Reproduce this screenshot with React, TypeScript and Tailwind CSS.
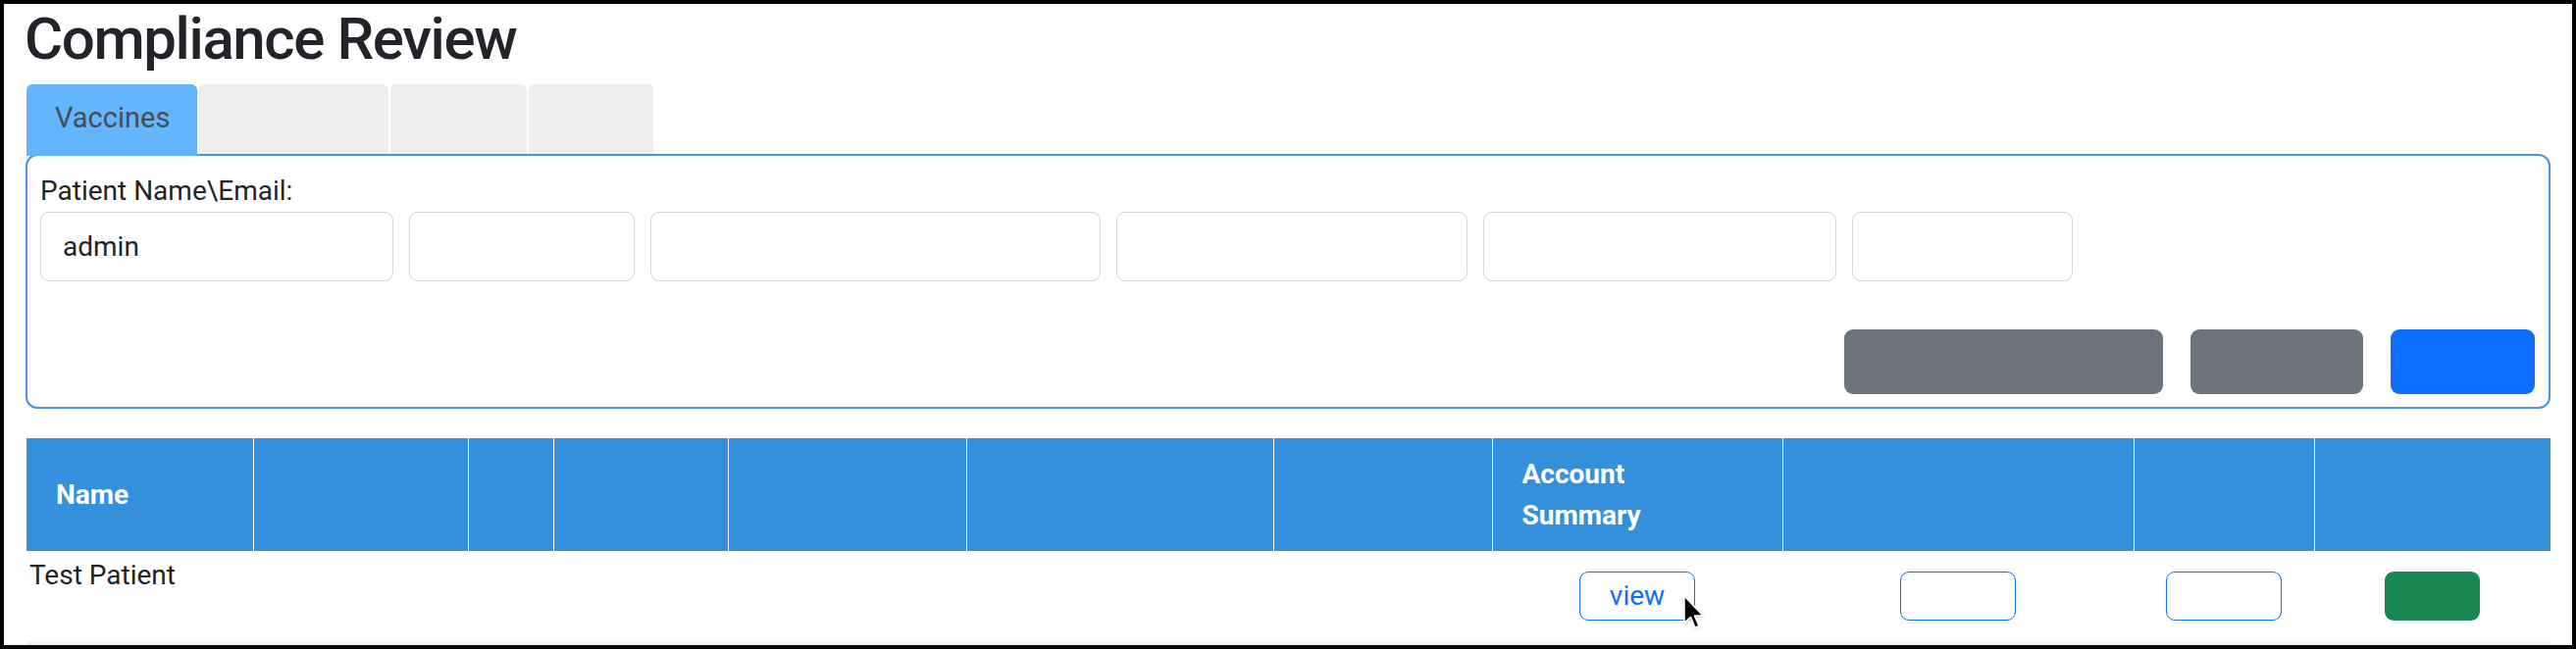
import { Fragment } from 'react'

const inputWidths = ['w-[360px]', 'w-[230px]', 'w-[459px]', 'w-[358px]', 'w-[360px]', 'w-[225px]']

const columns = [
  { w: 'w-[231px]', label: 'Name' },
  { w: 'w-[219px]', label: '' },
  { w: 'w-[87px]', label: '' },
  { w: 'w-[178px]', label: '' },
  { w: 'w-[243px]', label: '' },
  { w: 'w-[313px]', label: '' },
  { w: 'w-[223px]', label: '' },
  { w: 'w-[296px]', label: 'Account|Summary' },
  { w: 'w-[358px]', label: '' },
  { w: 'w-[184px]', label: '' },
  { w: 'w-[241px]', label: '' },
]

function Cursor() {
  return (
    <svg width="24" height="38" viewBox="0 0 20 32" className="absolute left-[105px] top-[23px] pointer-events-none drop-shadow">
      <path
        d="M1.5 1.5 L1.5 25 L7 19.8 L10.8 28.8 L14.2 27.4 L10.5 18.6 L17.8 18.6 Z"
        fill="#000"
        stroke="#fff"
        strokeWidth="1.4"
        strokeLinejoin="round"
      />
    </svg>
  )
}

export default function App() {
  return (
    <div className="h-[662px] w-[2626px] overflow-hidden border-4 border-black bg-white pl-[22px] pr-[22px] font-['Roboto',sans-serif] text-[#212529]">
      <h1 className="mb-[10px] -ml-[1px] text-[60px] font-medium leading-[72px] tracking-[-1.4px]">Compliance Review</h1>

      {/* Tabs */}
      <div className="flex h-[71px] gap-[2px] pl-[1px]">
        <div className="relative z-10 flex h-[73px] w-[174px] items-start rounded-t-[6px] bg-[#63b5fd] pl-[29px] pt-[13px] text-[29px] leading-[42px] text-[#454d55]">
          Vaccines
        </div>
        <div className="h-[71px] w-[193px] rounded-t-[6px] bg-[#eeeeee]" />
        <div className="h-[71px] w-[139px] rounded-t-[6px] bg-[#eeeeee]" />
        <div className="h-[71px] w-[127px] rounded-t-[6px] bg-[#eeeeee]" />
      </div>

      {/* Filter panel */}
      <div className="rounded-[12px] border-2 border-[#4a94de] px-[13px] pb-[13px] pt-[15px]">
        <label className="block text-[28px] leading-[42px]">Patient Name\Email:</label>
        <div className="flex gap-[16px]">
          {inputWidths.map((w, i) => (
            <input
              key={i}
              readOnly
              value={i === 0 ? 'admin' : ''}
              className={`${w} h-[71px] rounded-[9px] border border-[#ced4da] bg-white px-[22px] text-[28px] text-[#212529] outline-none`}
            />
          ))}
        </div>
        <div className="mt-[49px] flex justify-end gap-[28px] pr-[1px]">
          <button className="h-[66px] w-[325px] rounded-[9px] bg-[#6c757d]" />
          <button className="h-[66px] w-[176px] rounded-[9px] bg-[#6c757d]" />
          <button className="h-[66px] w-[147px] rounded-[9px] bg-[#0d6efd]" />
        </div>
      </div>

      {/* Results table */}
      <table className="mt-[30px] ml-[1px] w-[2573px] table-fixed border-collapse text-[28px] leading-[42px]">
        <thead>
          <tr className="h-[115px] bg-[#3590dc] text-white">
            {columns.map((c, i) => (
              <th
                key={i}
                className={`${c.w} px-[30px] text-left align-middle font-bold ${i < columns.length - 1 ? 'border-r border-white' : ''}`}
              >
                {c.label.split('|').map((part, j) => (
                  <Fragment key={j}>
                    {j > 0 && <br />}
                    {part}
                  </Fragment>
                ))}
              </th>
            ))}
          </tr>
        </thead>
        <tbody>
          <tr className="h-[92px]">
            <td className="pl-[3px] pt-[4px] align-top">Test Patient</td>
            <td />
            <td />
            <td />
            <td />
            <td />
            <td />
            <td className="text-center align-middle">
              <span className="relative inline-block align-middle">
                <button className="h-[50px] w-[118px] rounded-[9px] border border-[#0d6efd] text-[28px] leading-[42px] text-[#0d6efd]">
                  view
                </button>
                <Cursor />
              </span>
            </td>
            <td className="text-center align-middle">
              <button className="h-[50px] w-[118px] rounded-[9px] border border-[#0d6efd] align-middle" />
            </td>
            <td className="text-center align-middle">
              <button className="h-[50px] w-[118px] rounded-[9px] border border-[#0d6efd] align-middle" />
            </td>
            <td className="text-center align-middle">
              <button className="h-[50px] w-[97px] rounded-[9px] bg-[#198754] align-middle" />
            </td>
          </tr>
          <tr className="h-[92px] bg-[#f2f2f2]">
            {columns.map((_, i) => (
              <td key={i} />
            ))}
          </tr>
        </tbody>
      </table>
    </div>
  )
}
